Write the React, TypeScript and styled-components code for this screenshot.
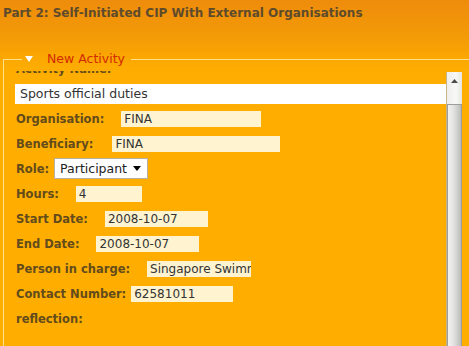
import React, { useLayoutEffect, useRef } from "react";
import styled, { createGlobalStyle } from "styled-components";

const GlobalStyle = createGlobalStyle`
  html, body {
    margin: 0;
    padding: 0;
    height: 100%;
    overflow: hidden;
  }
  body {
    background: linear-gradient(to bottom, #ee8c0c 0px, #f49c06 40px, #fcaa02 62px, #ffae00 75px, #ffae00 100%);
    font-family: "DejaVu Sans", Verdana, sans-serif;
  }
`;

const Page = styled.div`
  display: flex;
  flex-direction: column;
  height: 346px;
`;

const Title = styled.h2`
  margin: 0;
  padding: 6px 3px 0 3px;
  height: 51px;
  box-sizing: border-box;
  font-size: 12px;
  line-height: 15px;
  font-weight: bold;
  color: #5e4b2c;
  white-space: nowrap;
`;

const Fieldset = styled.fieldset`
  flex: 1;
  min-height: 0;
  margin: 0 0 0 3px;
  padding: 0 7px 0 11px;
  border: 1px solid #ffe18a;
  border-right: none;
  border-bottom: none;
  display: flex;
  flex-direction: column;
`;

const Legend = styled.legend`
  display: flex;
  align-items: center;
  gap: 14px;
  margin-left: 7px;
  padding: 0 6px 0 3px;
  font-size: 12.5px;
  line-height: 16px;
  color: #d22a00;
`;

const Triangle = styled.svg`
  display: block;
`;

const ScrollFrame = styled.div`
  flex: 1;
  min-height: 0;
  display: flex;
  margin-top: 4px;
`;

const Viewport = styled.div`
  flex: 1;
  min-width: 0;
  overflow: hidden;
`;

const Content = styled.div`
  display: flex;
  flex-direction: column;
  padding-bottom: 40px;
`;

const ActivityLabel = styled.div`
  height: 16px;
  line-height: 16px;
  font-size: 11.5px;
  font-weight: bold;
  color: #634b1c;
  padding-left: 1px;
`;

const WideInput = styled.div`
  margin-top: 7px;
  height: 20px;
  line-height: 20px;
  background: #ffffff;
  color: #333333;
  font-size: 12.5px;
  padding-left: 5px;
  margin-bottom: 2px;
`;

const Row = styled.div<{ $gap: number }>`
  height: 25px;
  display: flex;
  align-items: center;
  gap: ${(p) => p.$gap}px;
  padding-left: 1px;
`;

const Label = styled.span`
  font-size: 11.5px;
  font-weight: bold;
  color: #634b1c;
  white-space: nowrap;
`;

const Field = styled.div<{ $w: number }>`
  width: ${(p) => p.$w}px;
  height: 16px;
  line-height: 16px;
  background: #fff4cf;
  color: #333333;
  font-size: 12px;
  padding-left: 3px;
  box-sizing: border-box;
  overflow: hidden;
  white-space: nowrap;
`;

const Select = styled.div`
  width: 94px;
  height: 21px;
  box-sizing: border-box;
  background: #ffffff;
  border: 1px solid #b9b0a0;
  display: flex;
  align-items: center;
  justify-content: space-between;
  padding: 0 6px 0 5px;
  font-size: 12.5px;
  color: #222222;
`;

const Scrollbar = styled.div`
  width: 16px;
  margin-top: 1px;
  display: flex;
  flex-direction: column;
  border-left: 1px solid #c8b48a;
  background: #f5f4ef;
  box-sizing: border-box;
`;

const ArrowButton = styled.div`
  height: 32px;
  display: flex;
  justify-content: center;
  padding-top: 7px;
  box-sizing: border-box;
  background: linear-gradient(to right, #eeeeec, #f8f8f6 60%, #e6e6e2);
`;

const Thumb = styled.div`
  flex: 1;
  border: 1px solid #9c9c98;
  border-bottom: none;
  background: linear-gradient(to right, #f2f2f0 0%, #e4e4e2 40%, #c6c6c4 85%, #b8b8b6 100%);
`;

const rows: { label: string; gap: number; value?: string; w?: number; select?: boolean }[] = [
  { label: "Organisation:", gap: 17, value: "FINA", w: 140 },
  { label: "Beneficiary:", gap: 19, value: "FINA", w: 168 },
  { label: "Role:", gap: 5, select: true },
  { label: "Hours:", gap: 17, value: "4", w: 66 },
  { label: "Start Date:", gap: 17, value: "2008-10-07", w: 103 },
  { label: "End Date:", gap: 17, value: "2008-10-07", w: 103 },
  { label: "Person in charge:", gap: 17, value: "Singapore Swimming Association", w: 104 },
  { label: "Contact Number:", gap: 5, value: "62581011", w: 102 },
  { label: "reflection:", gap: 0 },
];

export default function App() {
  const viewRef = useRef<HTMLDivElement>(null);
  useLayoutEffect(() => {
    if (viewRef.current) viewRef.current.scrollTop = 10;
  }, []);
  return (
    <>
      <GlobalStyle />
      <Page>
        <Title>Part 2: Self-Initiated CIP With External Organisations</Title>
        <Fieldset>
          <Legend>
            <Triangle width="8" height="6" viewBox="0 0 8 6">
              <path d="M0 0 H8 L4 6 Z" fill="#ffffff" />
            </Triangle>
            New Activity
          </Legend>
          <ScrollFrame>
            <Viewport ref={viewRef}>
              <Content>
                <ActivityLabel>Activity Name:</ActivityLabel>
                <WideInput>Sports official duties</WideInput>
                {rows.map((r) => (
                  <Row key={r.label} $gap={r.gap}>
                    <Label>{r.label}</Label>
                    {r.select ? (
                      <Select>
                        Participant
                        <svg width="8" height="5" viewBox="0 0 8 5">
                          <path d="M0 0 H8 L4 5 Z" fill="#000000" />
                        </svg>
                      </Select>
                    ) : r.value !== undefined ? (
                      <Field $w={r.w ?? 100}>{r.value}</Field>
                    ) : null}
                  </Row>
                ))}
              </Content>
            </Viewport>
            <Scrollbar>
              <ArrowButton>
                <svg width="7" height="4" viewBox="0 0 7 4">
                  <path d="M0 4 H7 L3.5 0 Z" fill="#4d4d4d" />
                </svg>
              </ArrowButton>
              <Thumb />
            </Scrollbar>
          </ScrollFrame>
        </Fieldset>
      </Page>
    </>
  );
}
